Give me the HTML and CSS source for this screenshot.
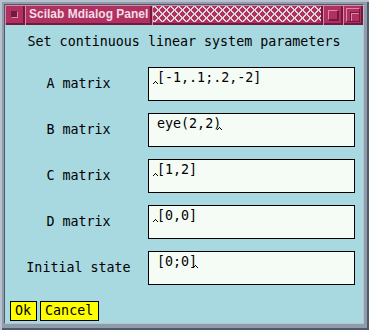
FILE: index.html
```html
<!DOCTYPE html>
<html lang="en">
<head>
  <meta charset="UTF-8">
  <title>Scilab Mdialog Panel</title>
  <link rel="stylesheet" href="styles.css">
</head>
<body>

  <div class="window">
    <div class="client">

      <!-- Title bar -->
      <div class="titlebar">
        <div class="tb-btn"><span class="close-icon"></span></div>
        <div class="tb-title">Scilab Mdialog Panel</div>
        <div class="tb-pattern"></div>
        <div class="tb-btn"><span class="min-icon"></span></div>
        <div class="tb-btn"><span class="max-icon"><span class="max-inner"></span></span></div>
      </div>

      <div class="panel">
        <p class="heading">Set continuous linear system parameters</p>

        <div class="fields">
          <div class="field-label">A matrix</div>
          <div class="field-box"><span class="caret"><svg width="5" height="3" viewBox="0 0 5 3"><rect x="2" y="0" width="1" height="1"/><rect x="1" y="1" width="1" height="1"/><rect x="3" y="1" width="1" height="1"/><rect x="0" y="2" width="1" height="1"/><rect x="4" y="2" width="1" height="1"/></svg></span>[-1,.1;.2,-2]</div>

          <div class="field-label">B matrix</div>
          <div class="field-box">eye(2,2)<span class="caret"><svg width="5" height="3" viewBox="0 0 5 3"><rect x="2" y="0" width="1" height="1"/><rect x="1" y="1" width="1" height="1"/><rect x="3" y="1" width="1" height="1"/><rect x="0" y="2" width="1" height="1"/><rect x="4" y="2" width="1" height="1"/></svg></span></div>

          <div class="field-label">C matrix</div>
          <div class="field-box"><span class="caret"><svg width="5" height="3" viewBox="0 0 5 3"><rect x="2" y="0" width="1" height="1"/><rect x="1" y="1" width="1" height="1"/><rect x="3" y="1" width="1" height="1"/><rect x="0" y="2" width="1" height="1"/><rect x="4" y="2" width="1" height="1"/></svg></span>[1,2]</div>

          <div class="field-label">D matrix</div>
          <div class="field-box"><span class="caret"><svg width="5" height="3" viewBox="0 0 5 3"><rect x="2" y="0" width="1" height="1"/><rect x="1" y="1" width="1" height="1"/><rect x="3" y="1" width="1" height="1"/><rect x="0" y="2" width="1" height="1"/><rect x="4" y="2" width="1" height="1"/></svg></span>[0,0]</div>

          <div class="field-label">Initial state</div>
          <div class="field-box">[0;0]<span class="caret"><svg width="5" height="3" viewBox="0 0 5 3"><rect x="2" y="0" width="1" height="1"/><rect x="1" y="1" width="1" height="1"/><rect x="3" y="1" width="1" height="1"/><rect x="0" y="2" width="1" height="1"/><rect x="4" y="2" width="1" height="1"/></svg></span></div>
        </div>

        <div class="actions">
          <button class="btn">Ok</button>
          <button class="btn">Cancel</button>
        </div>
      </div>

    </div>
  </div>

</body>
</html>
```

FILE: styles.css
```css
body {
  margin: 0;
  font-family: "DejaVu Sans Mono", monospace;
}
.window {
  width: 369px;
  height: 330px;
  box-sizing: border-box;
  padding: 4px 5px 6px 4px;
  background-color: #8e9cab;
  box-shadow: inset 2px 2px #b8c2cc, inset -2px -2px #4e5a68;
}
.client {
  height: 100%;
  box-sizing: border-box;
  border: 1px solid;
  border-color: #4e5a68 #b8c2cc #b8c2cc #4e5a68;
  background-color: #a8d8e0;
  display: flex;
  flex-direction: column;
}

/* title bar */
.titlebar {
  display: flex;
  height: 20px;
  background-color: #b03060;
}
.tb-btn,
.tb-title,
.tb-pattern {
  box-sizing: border-box;
  height: 20px;
  box-shadow: inset 1px 1px #d98aa8, inset -2px -2px #74193d;
}
.tb-btn {
  width: 20px;
  display: flex;
  align-items: center;
  justify-content: center;
}
.tb-title {
  width: 127px;
  padding-left: 4px;
  font-family: "Liberation Sans", Arial, sans-serif;
  font-weight: bold;
  font-size: 12px;
  line-height: 18px;
  color: #f2dde6;
  white-space: nowrap;
}
.tb-pattern {
  flex: 1;
  background-color: #b03060;
  background-image:
    repeating-linear-gradient(45deg, #ddd3d8 0 2px, transparent 2px 5.66px),
    repeating-linear-gradient(-45deg, #ddd3d8 0 2px, transparent 2px 5.66px);
  background-size: 100% 16px;
  background-repeat: no-repeat;
  background-position: 1px 1px;
}
.close-icon {
  width: 5px;
  height: 5px;
  margin: -1px 0 0 -1px;
  background-color: #74193d;
  border: 1px solid;
  border-color: #74193d #d98aa8 #d98aa8 #74193d;
}
.min-icon {
  width: 8px;
  height: 8px;
  margin: -1px 0 0 -1px;
  border: 1px solid;
  border-color: #d98aa8 #74193d #74193d #d98aa8;
  box-shadow: 1px 1px #74193d;
}
.max-icon {
  width: 12px;
  height: 12px;
  margin: -1px 0 0 -1px;
  border: 1px solid;
  border-color: #d98aa8 #74193d #74193d #d98aa8;
  position: relative;
}
.max-inner {
  position: absolute;
  left: 3px;
  top: 3px;
  width: 8px;
  height: 8px;
  border-left: 1px solid #74193d;
  border-top: 1px solid #74193d;
  box-shadow: inset 1px 1px #d98aa8;
}

/* dialog body */
.panel {
  flex: 1;
  font-size: 13.33px;
  line-height: 16px;
  color: #000;
}
.heading {
  margin: 0;
  padding-top: 9px;
  text-align: center;
  white-space: pre;
}
.fields {
  margin-top: 17px;
  display: grid;
  grid-template-columns: 143px 207px;
  grid-auto-rows: 34px;
  row-gap: 12px;
  align-items: center;
}
.field-label {
  padding-left: 4px;
  text-align: center;
  white-space: pre;
}
.field-box {
  height: 34px;
  box-sizing: border-box;
  border: 1px solid #000;
  background-color: #f5fcf5;
  padding: 2px 8px;
  white-space: pre;
}
.caret {
  position: relative;
  display: inline-block;
  width: 0;
  height: 0;
}
.caret svg {
  position: absolute;
  left: -4px;
  top: -1px;
  shape-rendering: crispEdges;
}
.actions {
  margin-top: 16px;
  padding-left: 5px;
  display: flex;
  gap: 3px;
}
.btn {
  height: 20px;
  margin: 0;
  padding: 0 5px 0 4px;
  border: 1px solid #000;
  border-radius: 0;
  background-color: #ffff00;
  font-family: "DejaVu Sans Mono", monospace;
  font-size: 13.33px;
  line-height: 18px;
  color: #000;
}
```
